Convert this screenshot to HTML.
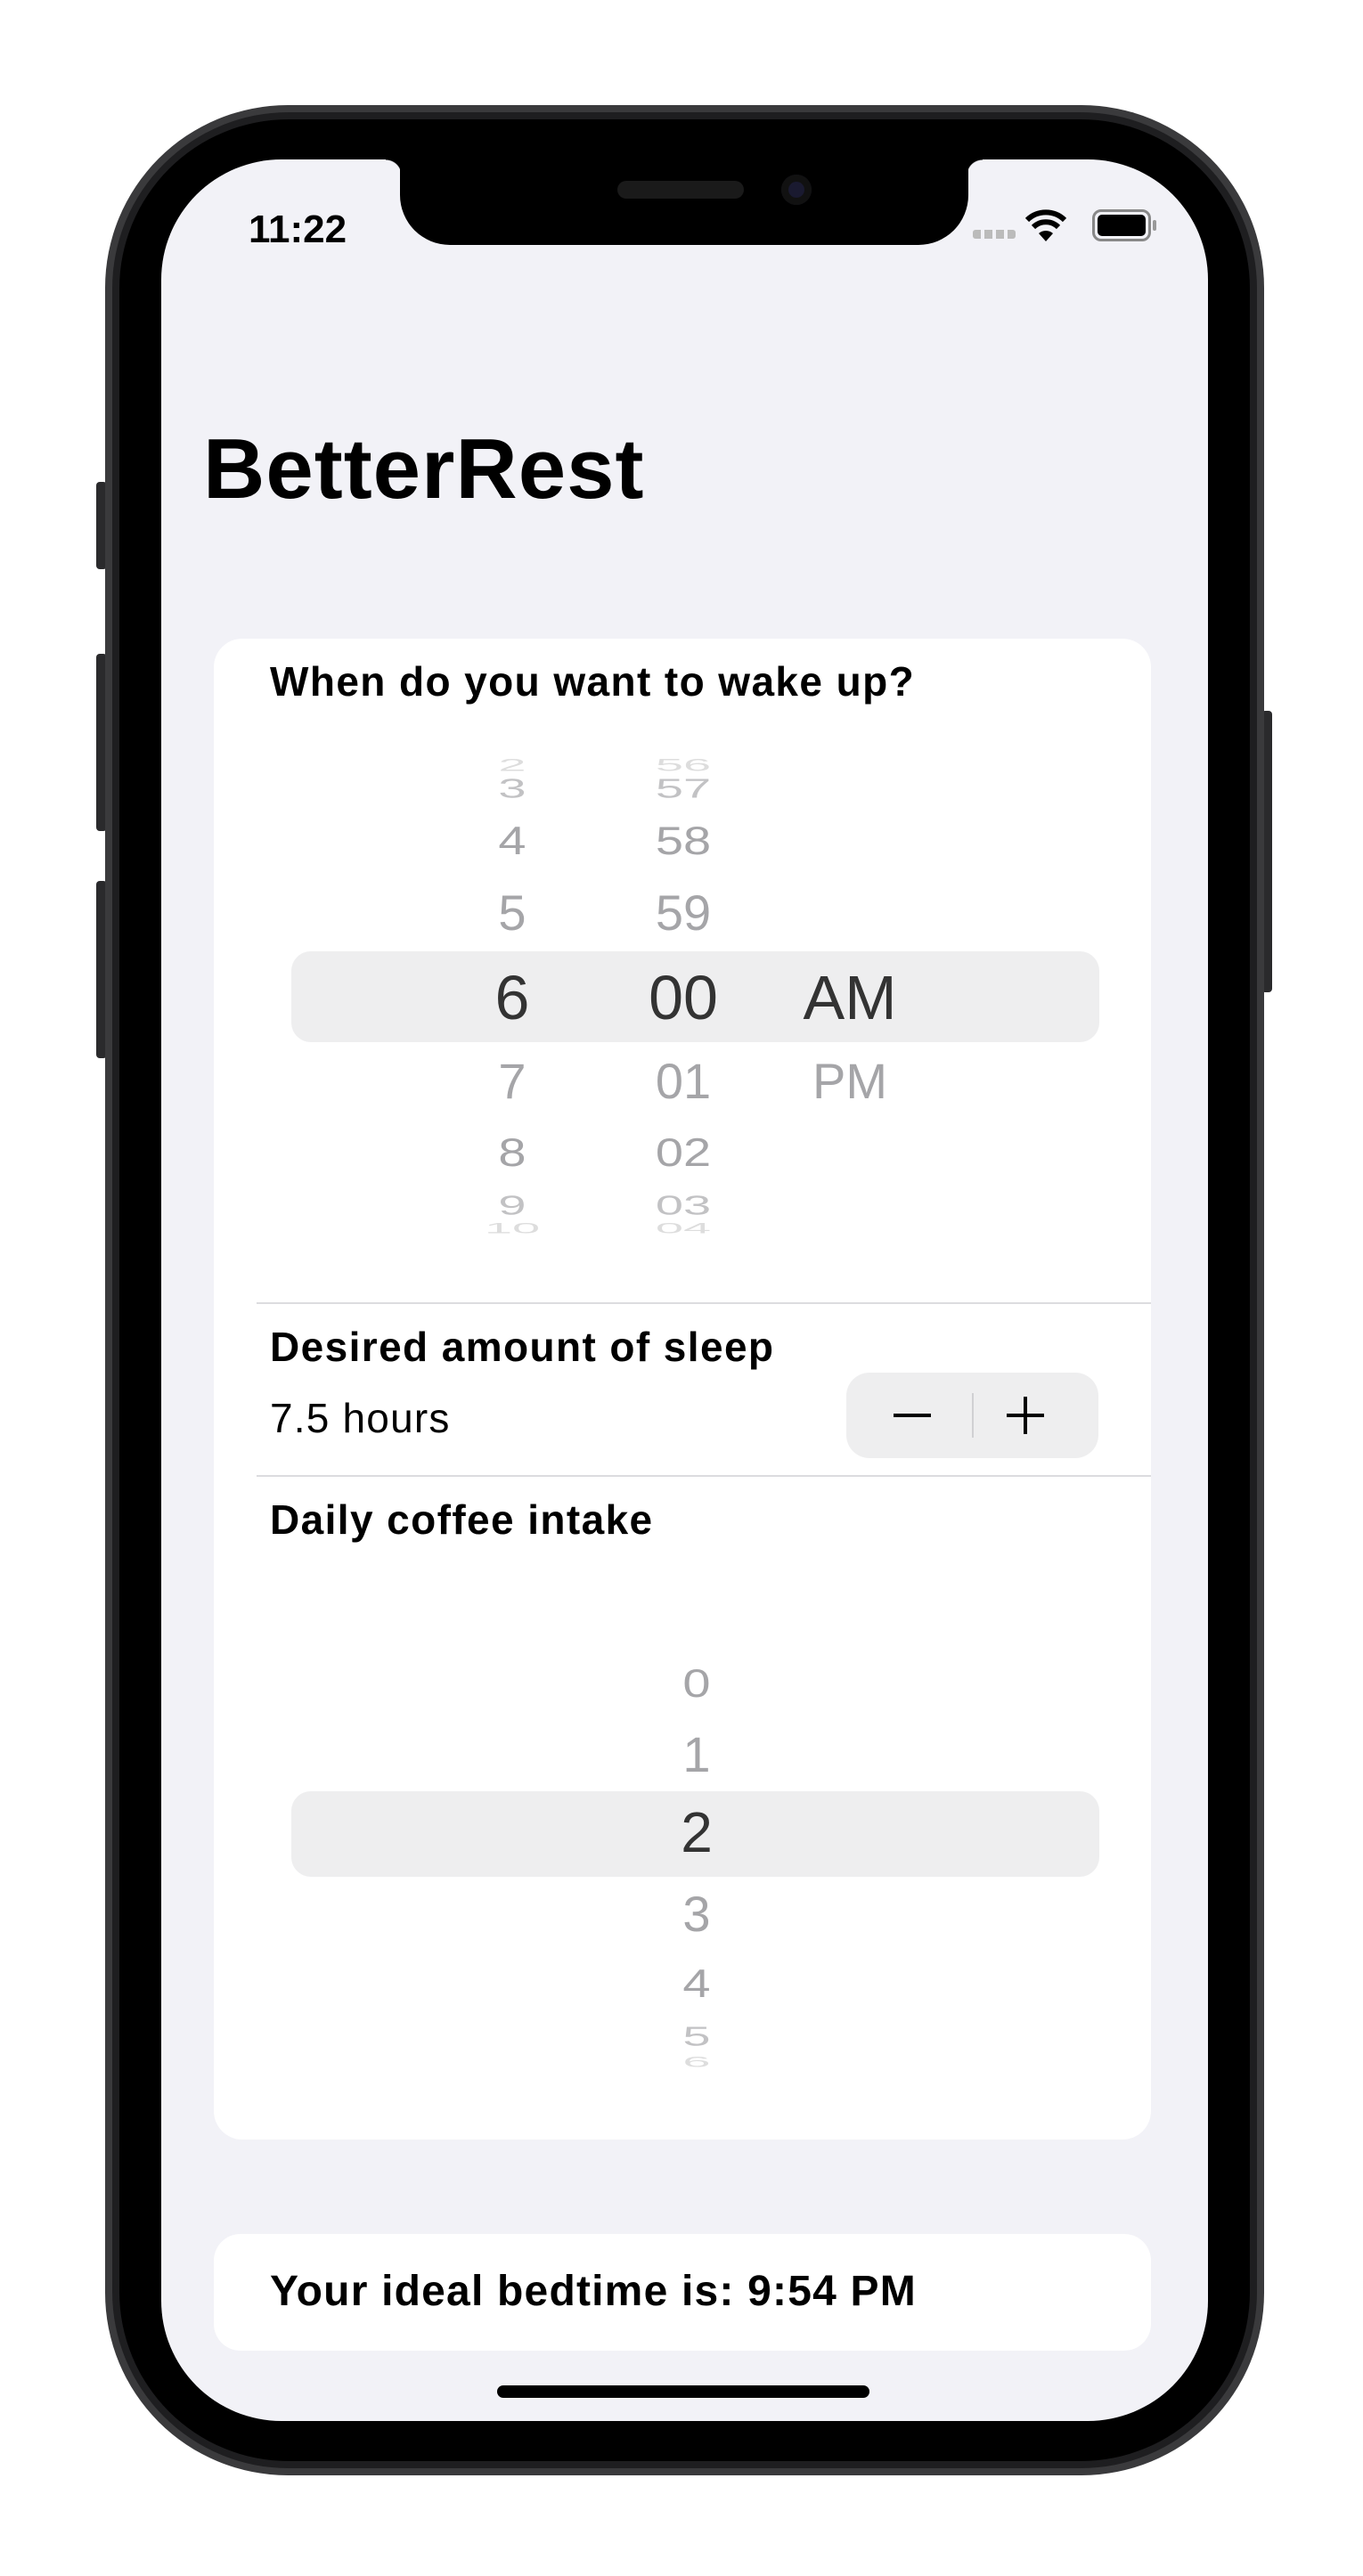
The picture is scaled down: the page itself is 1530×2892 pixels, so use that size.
<!DOCTYPE html>
<html><head><meta charset="utf-8"><style>
*{margin:0;padding:0;box-sizing:border-box}
body{width:1530px;height:2892px;background:#fff;position:relative;overflow:hidden;font-family:"Liberation Sans",sans-serif}
.a{position:absolute}
.btn{position:absolute;background:#2a2a2c;border-radius:4px}
.frame{left:118px;top:118px;width:1301px;height:2661px;border-radius:205px;background:#3a3a3c;}
.frame2{left:126px;top:126px;width:1285px;height:2645px;border-radius:198px;background:#1e1e20}
.bez{left:134px;top:134px;width:1269px;height:2629px;border-radius:190px;background:#000}
.screen{left:181px;top:179px;width:1175px;height:2539px;border-radius:135px;background:#f2f2f7;overflow:hidden}
.notch{left:268px;top:-5px;width:638px;height:101px;background:#000;border-radius:0 0 56px 56px}
.t{position:absolute;white-space:nowrap;line-height:1}
.b{font-size:46px;font-weight:bold;color:#000;letter-spacing:1.4px}
.n{position:absolute;transform:translate(-50%,-50%);white-space:nowrap;line-height:1;color:#a5a5a8;font-size:56px}
</style></head><body>
<div class="btn" style="left:108px;top:541px;width:12px;height:98px"></div>
<div class="btn" style="left:108px;top:734px;width:12px;height:199px"></div>
<div class="btn" style="left:108px;top:989px;width:12px;height:199px"></div>
<div class="btn" style="left:1416px;top:798px;width:12px;height:316px"></div>
<div class="a frame"></div><div class="a frame2"></div><div class="a bez"></div>
<div class="a screen">
  <div class="a" style="left:252px;top:0;width:18px;height:18px;background:radial-gradient(circle at 0 100%,transparent 17px,#000 18px)"></div>
  <div class="a" style="left:904px;top:0;width:18px;height:18px;background:radial-gradient(circle at 100% 100%,transparent 17px,#000 18px)"></div>
  <div class="a notch">
    <div class="a" style="left:244px;top:29px;width:142px;height:20px;border-radius:10px;background:#1a1a1a"></div>
    <div class="a" style="left:428px;top:22px;width:34px;height:34px;border-radius:50%;background:#1a1a30;box-shadow:inset 0 0 0 8px #111"></div>
  </div>
  <div class="t" style="left:98px;top:57px;font-size:44px;font-weight:bold;color:#000">11:22</div>
  <div class="a" style="left:911px;top:79px;width:48px;height:10px;background:repeating-linear-gradient(90deg,#bbb 0 9px,transparent 9px 13px);border-radius:3px"></div>
  <svg class="a" style="left:970px;top:56px" width="46" height="38" viewBox="0 0 46 38"><path d="M23 36 L15 27 A12 12 0 0 1 31 27 Z" fill="#000"/><path d="M9 20 A20 20 0 0 1 37 20" stroke="#000" stroke-width="6" fill="none"/><path d="M2 12 A30 30 0 0 1 44 12" stroke="#000" stroke-width="6" fill="none"/></svg>
  <div class="a" style="left:1045px;top:56px;width:66px;height:36px;border:3px solid #888;border-radius:10px;padding:3px"><div style="width:100%;height:100%;background:#000;border-radius:5px"></div></div>
  <div class="a" style="left:1113px;top:68px;width:4px;height:12px;background:#999;border-radius:2px"></div>

  <div class="t" style="left:47px;top:300px;font-size:96px;font-weight:bold;color:#000;letter-spacing:1px">BetterRest</div>

  <div class="a" style="left:59px;top:538px;width:1052px;height:1685px;background:#fff;border-radius:32px"></div>
  <div class="t b" style="left:122px;top:563px">When do you want to wake up?</div>
  <div class="a" style="left:146px;top:889px;width:907px;height:102px;background:#eeeeef;border-radius:22px"></div>
  <div class="n" style="left:394px;top:680px;transform:translate(-50%,-50%) scaleY(.35);color:#ddd">2</div>
  <div class="n" style="left:394px;top:706px;transform:translate(-50%,-50%) scaleY(.55);color:#c2c2c4">3</div>
  <div class="n" style="left:394px;top:765px;transform:translate(-50%,-50%) scaleY(.8)">4</div>
  <div class="n" style="left:394px;top:846px">5</div>
  <div class="n" style="left:394px;top:941px;font-size:70px;color:#333">6</div>
  <div class="n" style="left:394px;top:1035px">7</div>
  <div class="n" style="left:394px;top:1115px;transform:translate(-50%,-50%) scaleY(.8)">8</div>
  <div class="n" style="left:394px;top:1174px;transform:translate(-50%,-50%) scaleY(.55);color:#c2c2c4">9</div>
  <div class="n" style="left:394px;top:1200px;transform:translate(-50%,-50%) scaleY(.3);color:#ddd">10</div>
  <div class="n" style="left:586px;top:680px;transform:translate(-50%,-50%) scaleY(.35);color:#ddd">56</div>
  <div class="n" style="left:586px;top:706px;transform:translate(-50%,-50%) scaleY(.55);color:#c2c2c4">57</div>
  <div class="n" style="left:586px;top:765px;transform:translate(-50%,-50%) scaleY(.8)">58</div>
  <div class="n" style="left:586px;top:846px">59</div>
  <div class="n" style="left:586px;top:941px;font-size:70px;color:#333">00</div>
  <div class="n" style="left:586px;top:1035px">01</div>
  <div class="n" style="left:586px;top:1115px;transform:translate(-50%,-50%) scaleY(.8)">02</div>
  <div class="n" style="left:586px;top:1174px;transform:translate(-50%,-50%) scaleY(.55);color:#c2c2c4">03</div>
  <div class="n" style="left:586px;top:1200px;transform:translate(-50%,-50%) scaleY(.3);color:#ddd">04</div>
  <div class="n" style="left:773px;top:941px;font-size:70px;color:#333">AM</div>
  <div class="n" style="left:773px;top:1035px">PM</div>

  <div class="a" style="left:107px;top:1283px;width:1004px;height:2px;background:#dcdcdf"></div>
  <div class="t b" style="left:122px;top:1310px">Desired amount of sleep</div>
  <div class="t" style="left:122px;top:1390px;font-size:46px;color:#000;letter-spacing:1.2px">7.5 hours</div>
  <div class="a" style="left:769px;top:1362px;width:283px;height:96px;background:#eeeeef;border-radius:26px"></div>
  <div class="a" style="left:910px;top:1385px;width:2px;height:50px;background:#d0d0d3"></div>
  <div class="a" style="left:822px;top:1408px;width:42px;height:4px;background:#000"></div>
  <div class="a" style="left:949px;top:1408px;width:42px;height:4px;background:#000"></div>
  <div class="a" style="left:968px;top:1389px;width:4px;height:42px;background:#000"></div>
  <div class="a" style="left:107px;top:1477px;width:1004px;height:2px;background:#dcdcdf"></div>
  <div class="t b" style="left:122px;top:1504px">Daily coffee intake</div>

  <div class="a" style="left:146px;top:1832px;width:907px;height:96px;background:#eeeeef;border-radius:22px"></div>
  <div class="n" style="left:601px;top:1711px;transform:translate(-50%,-50%) scaleY(.8)">0</div>
  <div class="n" style="left:601px;top:1791px">1</div>
  <div class="n" style="left:601px;top:1878px;font-size:64px;color:#333">2</div>
  <div class="n" style="left:601px;top:1970px">3</div>
  <div class="n" style="left:601px;top:2048px;transform:translate(-50%,-50%) scaleY(.8)">4</div>
  <div class="n" style="left:601px;top:2107px;transform:translate(-50%,-50%) scaleY(.55);color:#c2c2c4">5</div>
  <div class="n" style="left:601px;top:2136px;transform:translate(-50%,-50%) scaleY(.3);color:#ddd">6</div>

  <div class="a" style="left:59px;top:2329px;width:1052px;height:131px;background:#fff;border-radius:30px"></div>
  <div class="t" style="left:122px;top:2370px;font-size:48px;font-weight:bold;color:#000;letter-spacing:1.2px">Your ideal bedtime is: 9:54 PM</div>
  <div class="a" style="left:377px;top:2499px;width:418px;height:14px;background:#000;border-radius:7px"></div>
</div>
</body></html>
